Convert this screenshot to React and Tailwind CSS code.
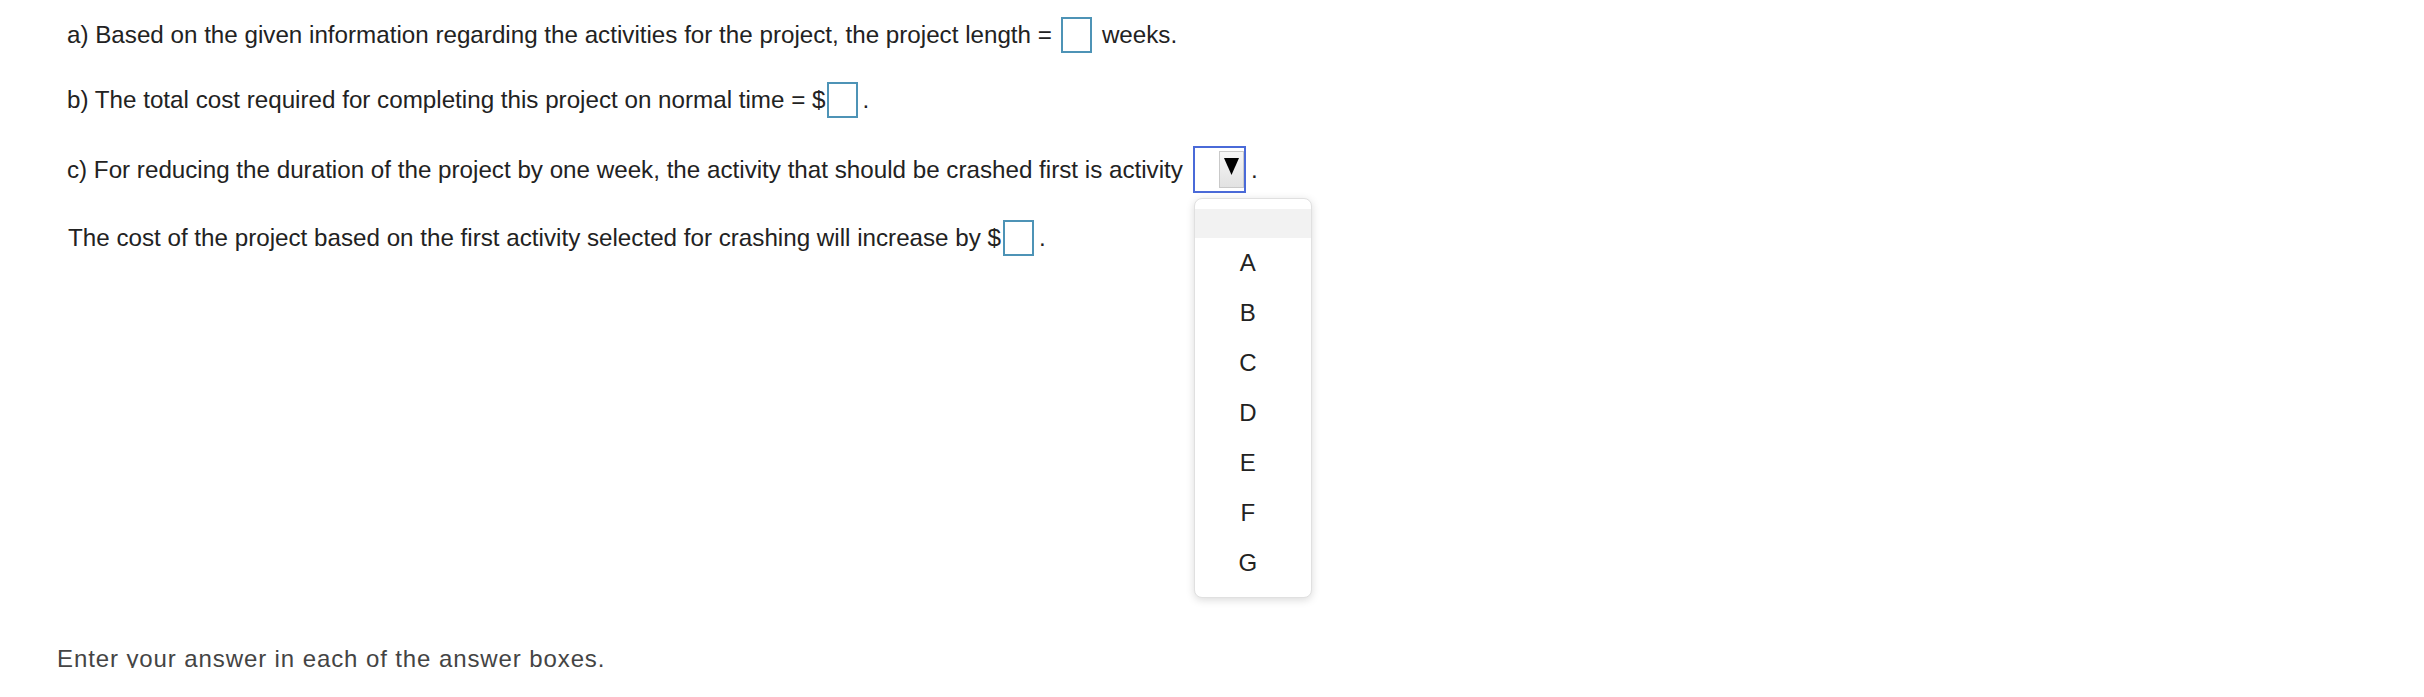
import React from "react";

function Box() {
  return <span className="inline-block w-[31px] h-[36px] border-2 border-[#4d93b6] bg-white shrink-0" />;
}

export default function App() {
  const items = ["A", "B", "C", "D", "E", "F", "G"];
  return (
    <div className="w-[2424px] h-[697px] bg-white overflow-hidden" style={{ fontFamily: '"Liberation Sans", Arial, sans-serif' }}>
      <div className="h-[668px] overflow-hidden relative text-[24.2px] text-[#222]">
        <div className="flex items-center h-[36px] mt-[17px] ml-[67px] leading-[36px] whitespace-nowrap">
          <span>a) Based on the given information regarding the activities for the project, the project length =</span>
          <span className="ml-[9px] flex"><Box /></span>
          <span className="ml-[10px]">weeks.</span>
        </div>
        <div className="flex items-center h-[36px] mt-[29px] ml-[67px] leading-[36px] whitespace-nowrap">
          <span>b) The total cost required for completing this project on normal time = $</span>
          <span className="ml-[2px] flex"><Box /></span>
          <span className="ml-[4px]">.</span>
        </div>
        <div className="flex items-center h-[47px] mt-[28px] ml-[67px] leading-[36px] whitespace-nowrap">
          <span>c) For reducing the duration of the project by one week, the activity that should be crashed first is activity</span>
          <span className="relative ml-[10px] flex">
            <span className="flex justify-end w-[53px] h-[47px] border-2 border-[#4a6ad8] bg-white pt-[3px] pb-[3px]">
              <span className="flex justify-center w-[25px] h-[37px] border border-[#c9c9c9] bg-gradient-to-b from-[#f6f6f6] to-[#e2e2e2] pt-[6px]">
                <svg width="15" height="17" viewBox="0 0 15 17"><path d="M0 0 H15 L7.5 17 Z" fill="#000" /></svg>
              </span>
            </span>
            <div className="absolute left-[1px] top-[52px] w-[118px] h-[400px] bg-white border border-[#e0e0e0] rounded-[8px] shadow-[0_2px_8px_rgba(0,0,0,0.15)] pt-[10px] z-10">
              <div className="h-[29px] bg-[#f2f2f2]" />
              {items.map((l) => (
                <div key={l} className="h-[50px] flex items-center justify-center pr-[10px] text-[24px] text-[#222] leading-none">{l}</div>
              ))}
            </div>
          </span>
          <span className="ml-[5px]">.</span>
        </div>
        <div className="flex items-center h-[36px] mt-[27px] ml-[68px] leading-[36px] whitespace-nowrap">
          <span>The cost of the project based on the first activity selected for crashing will increase by $</span>
          <span className="ml-[2px] flex"><Box /></span>
          <span className="ml-[5px]">.</span>
        </div>
        <div className="absolute left-[57px] top-[645px] text-[24px] leading-[28px] tracking-[0.9px] text-[#444] whitespace-nowrap">Enter your answer in each of the answer boxes.</div>
      </div>
    </div>
  );
}
